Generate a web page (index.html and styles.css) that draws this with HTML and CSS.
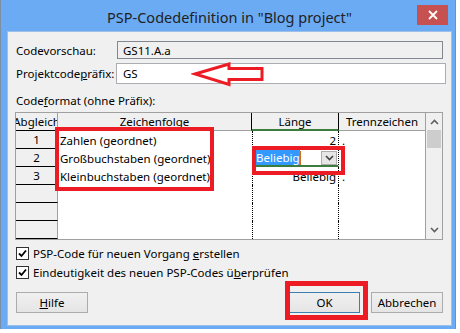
FILE: index.html
```html
<!DOCTYPE html>
<html lang="de">

<head>
  <meta charset="UTF-8">
  <title>PSP-Codedefinition</title>
  <link rel="stylesheet" href="styles.css">
</head>

<body>
  <div class="window">
    <div class="titlebar">
      <span class="title">PSP-Codedefinition in "Blog project"</span>
      <span class="close">
        <svg width="10" height="10" viewBox="0 0 10 10"><path d="M1 1 L9 9 M9 1 L1 9" stroke="#fff" stroke-width="1.8"/></svg>
      </span>
    </div>

    <div class="panel">
      <div class="field">
        <span class="label">Codevorschau:</span>
        <div class="input readonly">GS11.A.a</div>
      </div>
      <div class="field field-prefix">
        <span class="label">Projektcode<u>p</u>räfix:</span>
        <div class="input edit">GS</div>
      </div>

      <div class="section-label">Code<u>f</u>ormat (ohne Präfix):</div>

      <div class="table">
        <div class="sheet">
          <!-- header -->
          <div class="hcell rowhead-h"><span>Abgleich</span></div>
          <div class="hcell sep">Zeichenfolge</div>
          <div class="hcell sep active">Länge</div>
          <div class="hcell">Trennzeichen</div>

          <div class="rh">1</div>
          <div class="cell">Zahlen (geordnet)</div>
          <div class="cell len">2</div>
          <div class="cell sepc">.</div>

          <div class="rh">2</div>
          <div class="cell">Großbuchstaben (geordnet)</div>
          <div class="cell len editing">
            <span class="sel">Beliebig</span><span class="caret"></span>
            <span class="drop">
              <svg width="9" height="6" viewBox="0 0 9 6"><path d="M1 1 L4.5 4.5 L8 1" fill="none" stroke="#444" stroke-width="1.6"/></svg>
            </span>
          </div>
          <div class="cell sepc">.</div>

          <div class="rh">3</div>
          <div class="cell">Kleinbuchstaben (geordnet)</div>
          <div class="cell len">Beliebig</div>
          <div class="cell sepc">.</div>

          <div class="rh"></div>
          <div class="cell"></div>
          <div class="cell len"></div>
          <div class="cell"></div>

          <div class="rh"></div>
          <div class="cell"></div>
          <div class="cell len"></div>
          <div class="cell"></div>

          <div class="rh"></div>
          <div class="cell"></div>
          <div class="cell len"></div>
          <div class="cell"></div>
        </div>
        <div class="scrollbar">
          <svg class="arrow" width="9" height="6" viewBox="0 0 9 6"><path d="M1 5 L4.5 1.5 L8 5" fill="none" stroke="#606060" stroke-width="1.6"/></svg>
          <div class="thumb"></div>
          <div class="track"></div>
          <svg class="arrow" width="9" height="6" viewBox="0 0 9 6"><path d="M1 1 L4.5 4.5 L8 1" fill="none" stroke="#606060" stroke-width="1.6"/></svg>
        </div>
      </div>

      <label class="check">
        <span class="box"><svg width="11" height="11" viewBox="0 0 11 11"><path d="M2 5.5 L4.5 8 L9 2.5" fill="none" stroke="#000" stroke-width="1.8"/></svg></span>
        <span>PSP-Code für neuen Vorgang <u>e</u>rstellen</span>
      </label>
      <label class="check">
        <span class="box"><svg width="11" height="11" viewBox="0 0 11 11"><path d="M2 5.5 L4.5 8 L9 2.5" fill="none" stroke="#000" stroke-width="1.8"/></svg></span>
        <span>Eindeutigkeit des neuen PSP-Codes ü<u>b</u>erprüfen</span>
      </label>

      <div class="buttons">
        <button class="btn"><u>H</u>ilfe</button>
        <span class="spacer"></span>
        <button class="btn default">OK</button>
        <button class="btn">Abbrechen</button>
      </div>
    </div>

    <!-- red annotations drawn over the dialog -->
    <svg class="mark-arrow" width="80" height="30" viewBox="0 0 80 30">
      <path d="M4 12 L38 2 L38 6.5 L71 6.5 L71 17.5 L38 17.5 L38 22.5 Z" fill="none" stroke="#ed1c24" stroke-width="3" stroke-linejoin="miter"/>
    </svg>
    <div class="mark mark-list"></div>
    <div class="mark mark-len"></div>
    <div class="mark mark-ok"></div>
  </div>
</body>

</html>
```

FILE: styles.css
```css
* {
  box-sizing: border-box;
}

body {
  margin: 0;
  background: #fff;
  font-family: "Noto Sans", "Open Sans", sans-serif;
  font-size: 11.5px;
  color: #000;
}

u {
  text-decoration: underline;
  text-underline-offset: 1px;
}

.window {
  position: relative;
  width: 456px;
  height: 329px;
  background: #6aabf4;
  border-left: 1px solid #7c8ea3;
  border-right: 1px solid #7c8ea3;
  padding: 0 4px 4px 7px;
  display: flex;
  flex-direction: column;
}

.titlebar {
  height: 33px;
  display: flex;
  justify-content: center;
  align-items: center;
  position: relative;
}

.title {
  font-size: 14.5px;
  color: #222;
  padding-top: 2px;
}

.close {
  position: absolute;
  top: 5px;
  right: 3px;
  width: 31px;
  height: 20px;
  background: #c75050;
  display: flex;
  align-items: center;
  justify-content: center;
}

.panel {
  background: #f0f0f0;
  box-shadow: 0 0 0 1px #9dc0ea;
  flex: 1;
  padding: 9px 8px 12px 8px;
  display: flex;
  flex-direction: column;
}

.field {
  display: flex;
  align-items: center;
  height: 18px;
}

.field-prefix {
  margin-top: 4px;
  height: 21px;
}

.label {
  width: 101px;
}

.input {
  flex: 1;
  height: 100%;
  display: flex;
  align-items: center;
  padding-left: 5px;
}

.readonly {
  background: #f0f0f0;
  border: 1px solid #828790;
}

.edit {
  background: #fff;
  border: 1px solid #abadb3;
  margin-left: -1px;
  margin-right: -3px;
  padding-left: 6px;
}

.section-label {
  margin-top: 10px;
  height: 14px;
  line-height: 14px;
}

.table {
  margin-top: 4px;
  margin-left: -1px;
  height: 128px;
  border: 1px solid #a0a0a0;
  display: flex;
  overflow: hidden;
  background: #fff;
}

.sheet {
  width: 409px;
  display: grid;
  grid-template-columns: 42px 194px 87px 86px;
  grid-auto-rows: 18px;
  align-content: start;
}

.hcell {
  background: #f0f0f0;
  border-bottom: 1px solid #a0a0a0;
  display: flex;
  align-items: center;
  justify-content: center;
  white-space: nowrap;
  overflow: hidden;
}

.hcell.sep {
  border-right: 1px solid #000;
}

.hcell.active {
  border-bottom: 2px solid #3b7d3b;
  padding-top: 1px;
}

.rowhead-h {
  border-right: 1px solid #a0a0a0;
  border-bottom: 1px solid #000;
}

.rowhead-h span {
  flex: none;
}

.rh {
  background: #f0f0f0;
  border-right: 1px solid #a0a0a0;
  border-bottom: 1px solid #000;
  display: flex;
  align-items: center;
  justify-content: center;
}

.cell {
  display: flex;
  align-items: center;
  padding-left: 2px;
  white-space: nowrap;
  overflow: hidden;
}

.cell.len {
  border-left: 1px dotted #000;
  border-right: 1px dotted #000;
  justify-content: flex-end;
  padding-right: 2px;
}

.cell.sepc {
  padding-left: 3px;
}

.cell.editing {
  justify-content: flex-start;
  border-bottom: 2px solid #3b7d3b;
  padding: 1px 1px 0 3px;
}

.sel {
  background: #3399ff;
  color: #fff;
  line-height: 15px;
}

.caret {
  width: 1px;
  height: 14px;
  background: #d07020;
}

.drop {
  margin-left: auto;
  width: 16px;
  height: 14px;
  border: 1px solid #acacac;
  background: #e6e6e6;
  display: flex;
  align-items: center;
  justify-content: center;
}

.scrollbar {
  width: 17px;
  background: #f0f0f0;
  border-left: 1px solid #a0a0a0;
  display: flex;
  flex-direction: column;
  align-items: center;
}

.scrollbar .arrow {
  margin: 6px 0;
}

.thumb {
  width: 14px;
  height: 18px;
  background: #cdcdcd;
  margin-top: -1px;
}

.track {
  flex: 1;
}

.check {
  display: flex;
  align-items: center;
  height: 19px;
  gap: 4px;
}

.check:first-of-type {
  margin-top: 4px;
}

.box {
  width: 13px;
  height: 13px;
  border: 1px solid #333;
  background: #fff;
  display: flex;
  align-items: center;
  justify-content: center;
}

.buttons {
  margin-top: 10px;
  display: flex;
  gap: 11px;
}

.spacer {
  flex: 1;
}

.btn {
  width: 72px;
  height: 21px;
  font: inherit;
  border: 1px solid #acacac;
  background: linear-gradient(#f0f0f0, #e5e5e5);
  padding: 0;
}

.btn.default {
  width: 71px;
  border-color: #3c7fb1;
}

.mark-arrow {
  position: absolute;
  left: 190px;
  top: 62px;
}

.mark {
  position: absolute;
  border: 4px solid #ed1c24;
}

.mark-list {
  left: 54px;
  top: 127px;
  width: 159px;
  height: 64px;
}

.mark-len {
  left: 251px;
  top: 146px;
  width: 93px;
  height: 29px;
}

.mark-ok {
  left: 284px;
  top: 281px;
  width: 83px;
  height: 39px;
  border-width: 5px;
}
```
